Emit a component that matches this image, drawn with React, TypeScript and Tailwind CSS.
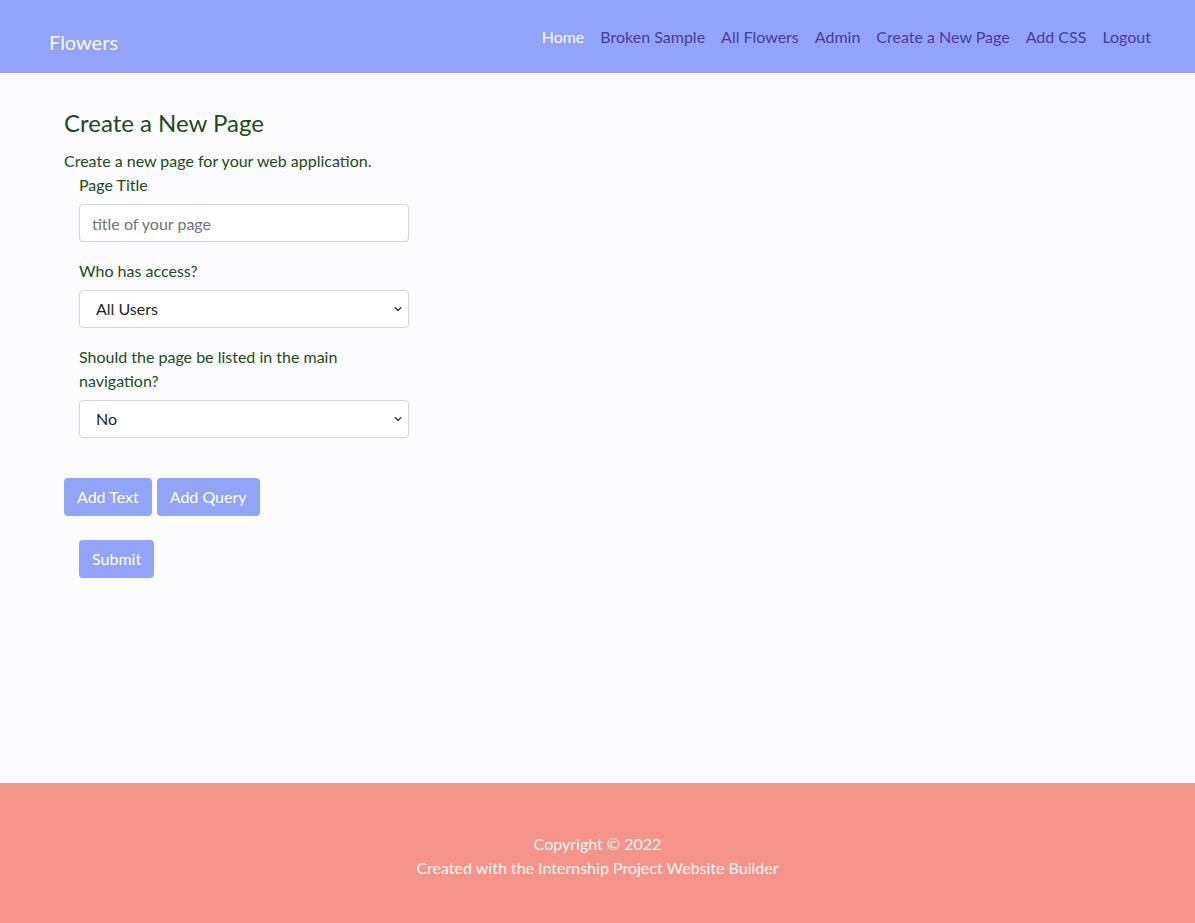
import { ChevronDown } from "lucide-react";

const navLinks = ["Broken Sample", "All Flowers", "Admin", "Create a New Page", "Add CSS", "Logout"];

const font = { fontFamily: "Lato, 'Open Sans', sans-serif" };

const Navbar = () => (
  <nav className="h-[73px] bg-[#92a4f8] flex items-start justify-between pl-[49px] pr-[36px] pt-[25px]">
    <a className="text-[20px] leading-[30px] mt-[2px] text-[#f8f9ff]">Flowers</a>
    <ul className="flex">
      <li className="px-2 text-[16px] leading-6 text-[#f8f9ff]">Home</li>
      {navLinks.map(l => (
        <li key={l} className="px-2 text-[16px] leading-6 text-[#4a3b9c]">{l}</li>
      ))}
    </ul>
  </nav>
);

const Select = ({ value, options }: { value: string; options: string[] }) => (
  <div className="relative w-[330px]">
    <select
      defaultValue={value}
      className="appearance-none w-full h-[38px] rounded border border-[#ced4da] bg-white pl-[16px] pr-9 text-[16px] text-[#212529] outline-none"
    >
      {options.map(o => <option key={o}>{o}</option>)}
    </select>
    <ChevronDown size={12} strokeWidth={2.5} className="absolute right-[5px] top-[13px] text-[#343a40] pointer-events-none" />
  </div>
);

export default function App() {
  return (
    <div className="min-h-screen flex flex-col bg-[#fcfcff]" style={font}>
      <Navbar />
      <main className="flex-1 pl-[64px] pt-[35px]">
        <h2 className="text-[24px] leading-[29px] text-[#1e4a22] mb-[12px]">Create a New Page</h2>
        <p className="text-[16px] leading-6 text-[#1e4a22]">Create a new page for your web application.</p>
        <form className="pl-[15px] w-[345px] text-[16px] leading-6 text-[#1e4a22]">
          <label className="block mb-[7px]">Page Title</label>
          <input
            placeholder="title of your page"
            className="w-[330px] h-[38px] rounded border border-[#ced4da] bg-white px-3 text-[16px] text-[#212529] placeholder:text-[#6c757d] outline-none"
          />
          <label className="block mt-[17px] mb-[7px]">Who has access?</label>
          <Select value="All Users" options={["All Users", "Admins Only"]} />
          <label className="block mt-[17px] mb-[7px] w-[330px]">Should the page be listed in the main navigation?</label>
          <Select value="No" options={["No", "Yes"]} />
        </form>
        <div className="flex gap-[5px] mt-[40px]">
          <button className="h-[38px] px-[13px] rounded bg-[#92a4f8] text-white text-[16px]">Add Text</button>
          <button className="h-[38px] px-[13px] rounded bg-[#92a4f8] text-white text-[16px]">Add Query</button>
        </div>
        <div className="pl-[15px] mt-[24px]">
          <button className="h-[38px] px-[13px] rounded bg-[#92a4f8] text-white text-[16px]">Submit</button>
        </div>
      </main>
      <footer className="h-[140px] bg-[#f59489] flex flex-col items-center justify-center pt-[6px] text-[16px] leading-6 text-[#fff8f4]">
        <span>Copyright © 2022</span>
        <span>Created with the Internship Project Website Builder</span>
      </footer>
    </div>
  );
}
